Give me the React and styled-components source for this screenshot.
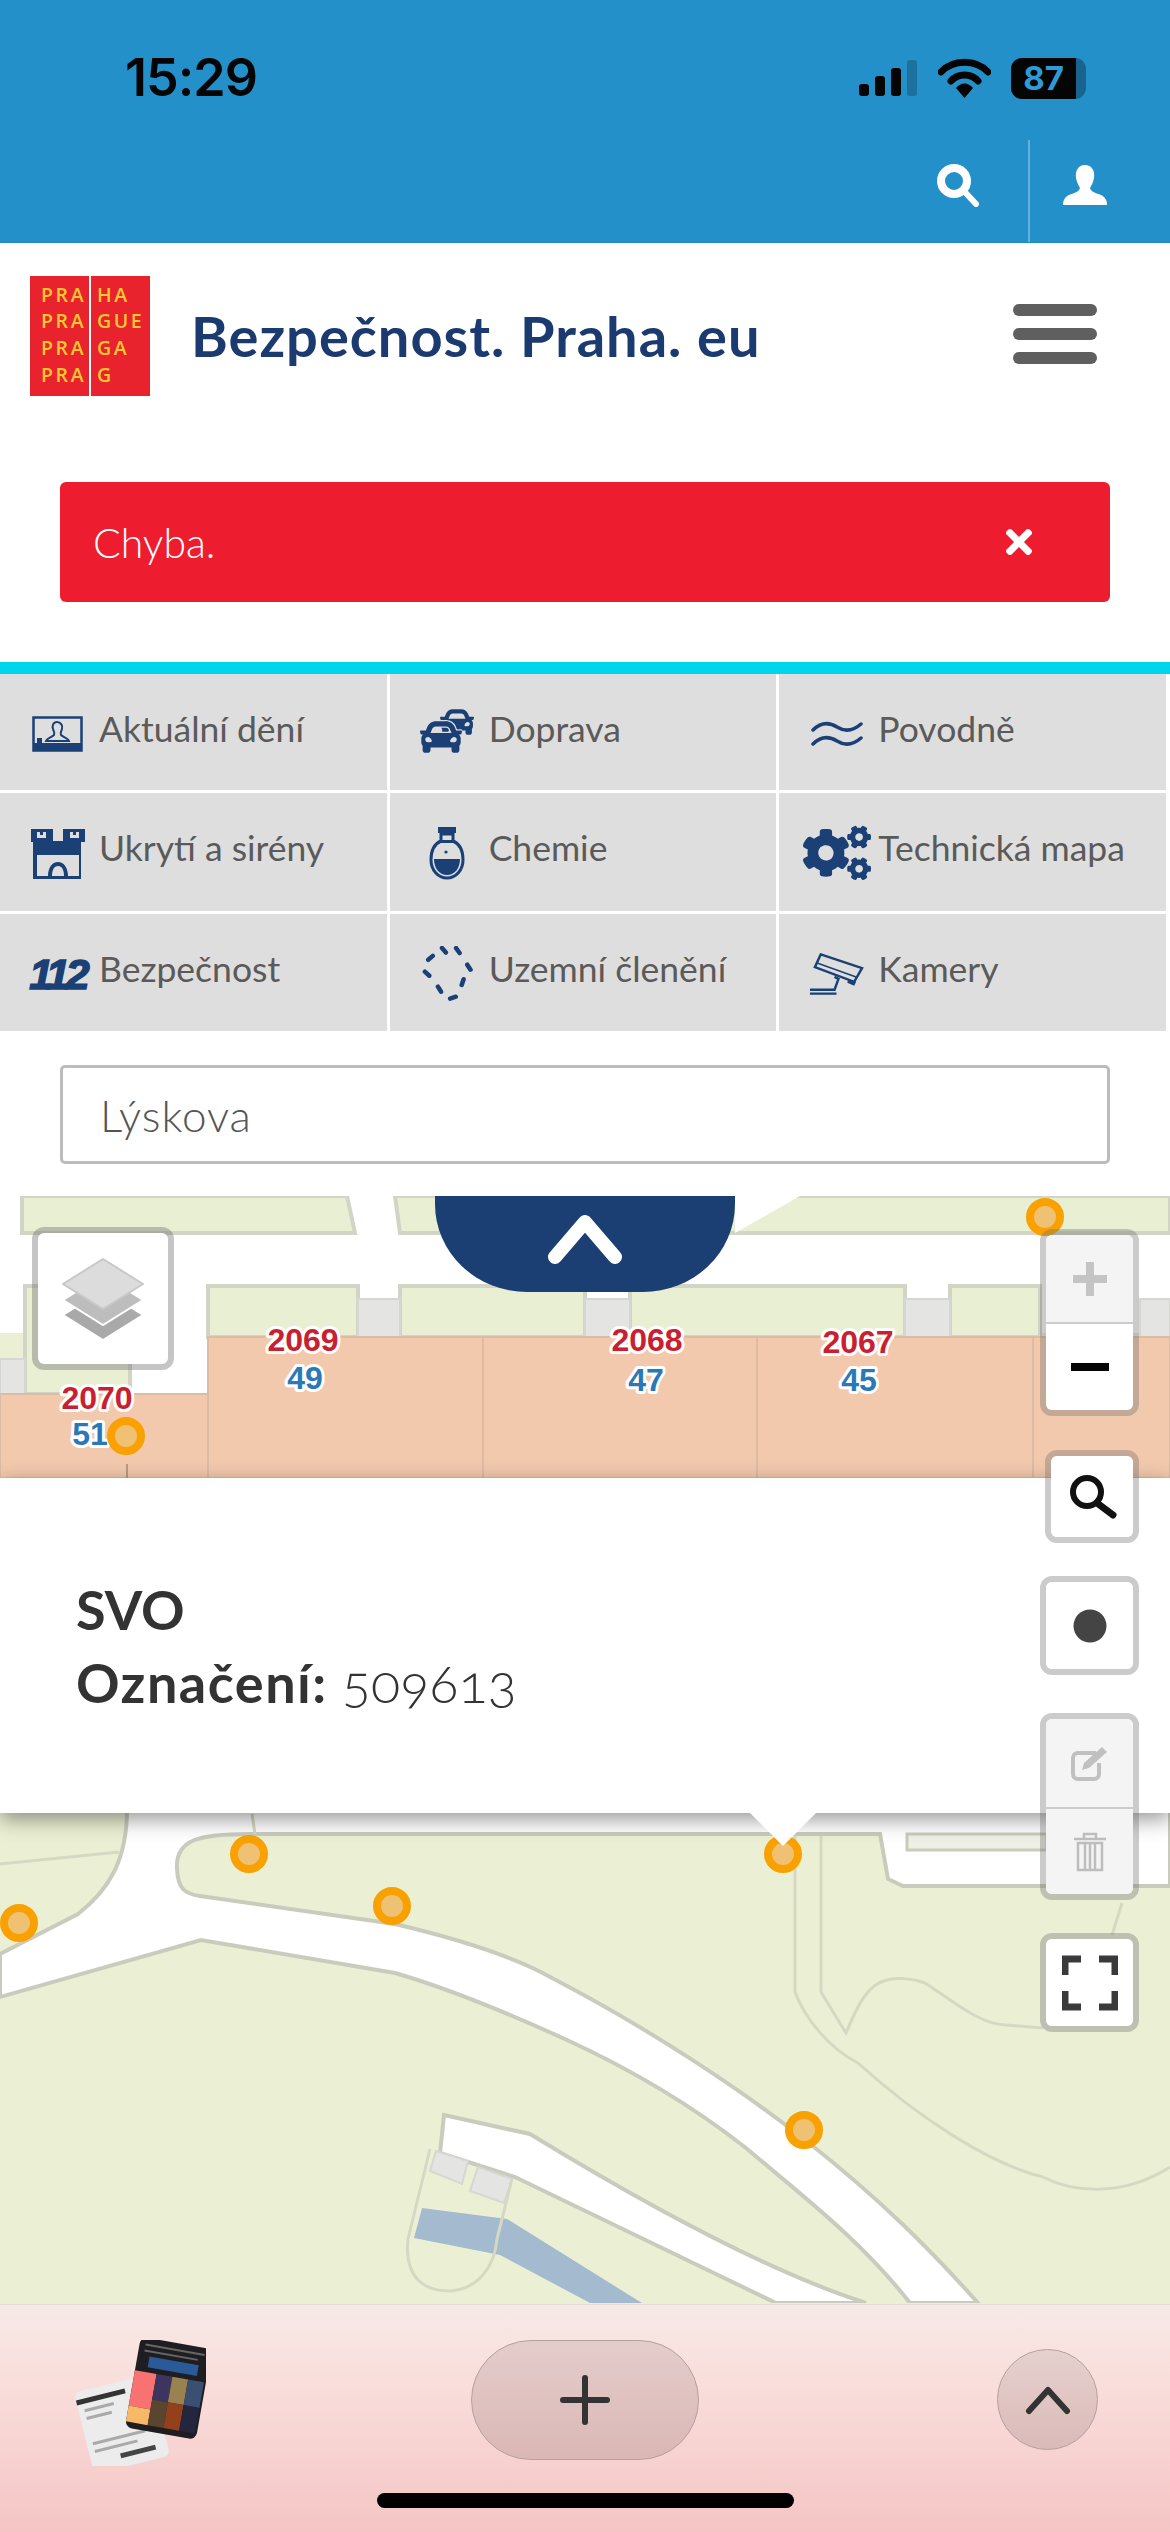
import React from "react";
import styled, { createGlobalStyle } from "styled-components";
import { FaCar, FaCogs, FaTimes } from "react-icons/fa";

const GlobalStyle = createGlobalStyle`
  html, body {
    margin: 0;
    padding: 0;
    background: #fff;
  }
  * {
    box-sizing: border-box;
  }
`;

const navy = "#1b4076";

const Page = styled.div`
  width: 1170px;
  height: 2532px;
  display: flex;
  flex-direction: column;
  overflow: hidden;
  background: #fff;
  font-family: "Lato", "Open Sans", sans-serif;
`;

const TopBar = styled.header`
  height: 243px;
  background: #2490c9;
  border-bottom: 1px solid #1f8fb8;
  display: flex;
  flex-direction: column;
`;

const StatusBar = styled.div`
  height: 140px;
  display: flex;
  align-items: flex-start;
  justify-content: space-between;
  padding: 50px 84px 0 125px;
`;

const Clock = styled.span`
  font-family: "Inter", sans-serif;
  font-size: 52px;
  font-weight: 600;
  line-height: 56px;
  letter-spacing: -1px;
  color: #050505;
`;

const StatusIcons = styled.div`
  display: flex;
  align-items: center;
  gap: 20px;
  height: 56px;
`;

const BatteryWrap = styled.div`
  position: relative;
  width: 75px;
  height: 41px;
  border-radius: 11px;
  background: rgba(5, 30, 50, 0.38);
  overflow: hidden;
`;

const BatteryFill = styled.div`
  width: 87%;
  height: 100%;
  background: #050505;
  display: flex;
  align-items: center;
  justify-content: center;
  color: #2f9bd6;
  font-family: "Inter", sans-serif;
  font-size: 33px;
  font-weight: 700;
`;

const TopActions = styled.div`
  flex: 1;
  display: flex;
  justify-content: flex-end;
`;

const TopAction = styled.div`
  display: flex;
  align-items: center;
  justify-content: center;
  width: ${(p) => p.$w}px;
  padding: 0 30px 12px 0;
  border-left: ${(p) => (p.$divided ? "2px solid #63b2dc" : "none")};
`;

const Brand = styled.div`
  display: flex;
  align-items: center;
  padding: 33px 73px 87px 30px;
  height: 239px;
`;

const Logo = styled.div`
  width: 120px;
  height: 120px;
  flex: none;
  background: #e8232e;
  display: grid;
  grid-template-columns: 59px 59px;
  column-gap: 2px;
  background-image: linear-gradient(#fff, #fff);
  background-size: 2px 100%;
  background-position: 59px 0;
  background-repeat: no-repeat;
`;

const LogoColumn = styled.div`
  padding: 6px 0 0 ${(p) => p.$left}px;
  color: #fdc82f;
  font-family: "Open Sans", sans-serif;
  font-size: 19.5px;
  font-weight: 600;
  line-height: 26.7px;
  letter-spacing: 2.6px;
  white-space: nowrap;
`;

const Title = styled.h1`
  margin: 0 0 0 41px;
  flex: 1;
  color: #1b3a6f;
  font-size: 56px;
  font-weight: 700;
  line-height: 70px;
  letter-spacing: 1px;
  white-space: nowrap;
`;

const Burger = styled.div`
  width: 84px;
  display: flex;
  flex-direction: column;
  gap: 12px;
  margin-bottom: 3px;
`;

const BurgerBar = styled.span`
  height: 12px;
  border-radius: 6px;
  background: #5f5f5f;
`;

const Alert = styled.div`
  margin: 0 60px 60px;
  height: 120px;
  padding: 0 72px 0 33px;
  border-radius: 6px;
  background: #ee1c2f;
  color: #fff;
  display: flex;
  align-items: center;
  justify-content: space-between;
  font-size: 41px;
  font-weight: 300;
`;

const CyanStrip = styled.div`
  height: 12px;
  background: #00d5ee;
`;

const Tiles = styled.nav`
  display: grid;
  grid-template-columns: repeat(3, 1fr);
  grid-template-rows: 116px 118px 117px;
  gap: 3px;
  padding-right: 4px;
`;

const Tile = styled.a`
  display: flex;
  align-items: flex-start;
  gap: 14px;
  padding: 28px 0 0 30px;
  background: #dedede;
  color: #5a5a5a;
  font-size: 35.5px;
  line-height: 54px;
  white-space: nowrap;
`;

const TileIcon = styled.span`
  flex: none;
  width: 55px;
  height: 64px;
  display: flex;
  align-items: center;
  justify-content: center;
  position: relative;
  color: ${navy};
`;

const CarBack = styled(FaCar)`
  position: absolute;
  left: 20px;
  top: 3px;
  width: 34px;
  height: 34px;
`;

const CarFront = styled(FaCar)`
  position: absolute;
  left: 0;
  top: 14px;
  width: 42px;
  height: 42px;
  stroke: #dedede;
  stroke-width: 30px;
  paint-order: stroke;
`;

const Cogs = styled(FaCogs)`
  width: 68px;
  height: 68px;
  flex: none;
  margin-left: -6px;
  margin-right: -7px;
`;

const Badge112 = styled.span`
  font-family: "Liberation Sans", sans-serif;
  font-style: italic;
  font-weight: 700;
  font-size: 43px;
  letter-spacing: -4px;
  line-height: 64px;
  color: ${navy};
  -webkit-text-stroke: 1.5px ${navy};
`;

const SearchRow = styled.div`
  padding: 34px 60px 32px;
`;

const SearchInput = styled.div`
  height: 99px;
  border: 3px solid #bcbcbc;
  border-radius: 5px;
  padding-left: 37px;
  display: flex;
  align-items: center;
  color: #555;
  font-size: 44px;
  font-weight: 300;
  letter-spacing: 1px;
`;

const MapArea = styled.section`
  position: relative;
  flex: 1;
  overflow: hidden;
  background: #ebf0d4;
`;

const MapCanvas = styled.svg`
  display: block;
  width: 1170px;
  height: 1107px;
`;

const CollapseTab = styled.div`
  position: absolute;
  left: 435px;
  top: 0;
  width: 300px;
  height: 96px;
  border-radius: 0 0 92px 92px / 0 0 88px 88px;
  background: #1b3f72;
  display: flex;
  justify-content: center;
  padding-top: 18px;
`;

const LayersButton = styled.div`
  position: absolute;
  left: 32px;
  top: 31px;
  width: 142px;
  height: 143px;
  background: #fff;
  background-clip: padding-box;
  border: 6px solid rgba(110, 110, 110, 0.4);
  border-radius: 12px;
  display: flex;
  align-items: center;
  justify-content: center;
`;

const Popup = styled.div`
  position: absolute;
  left: 0;
  right: 0;
  top: 282px;
  height: 335px;
  padding: 95px 0 0 76px;
  background: #fff;
  box-shadow: 0 6px 20px rgba(0, 0, 0, 0.42);
  color: #333;
  font-size: 54px;
  line-height: 73px;
  &::after {
    content: "";
    position: absolute;
    left: 750px;
    top: 100%;
    border-left: 33px solid transparent;
    border-right: 33px solid transparent;
    border-top: 33px solid #fff;
  }
`;

const PopupTitle = styled.div`
  font-weight: 700;
`;

const PopupLine = styled.div`
  font-weight: 700;
  letter-spacing: 1.5px;
`;

const PopupValue = styled.span`
  font-weight: 300;
  margin-left: 14px;
  font-variant-numeric: oldstyle-nums;
  letter-spacing: 0;
`;

const Controls = styled.div`
  position: absolute;
  right: 31px;
  top: 33px;
  width: 99px;
  display: flex;
  flex-direction: column;
  align-items: flex-end;
`;

const ControlGroup = styled.div`
  width: ${(p) => p.$w || 99}px;
  margin-top: ${(p) => p.$gap || 0}px;
  border: 6px solid rgba(110, 110, 110, 0.36);
  border-radius: 12px;
  background-clip: padding-box;
  overflow: hidden;
  display: flex;
  flex-direction: column;
`;

const ControlButton = styled.div`
  height: ${(p) => p.$h}px;
  display: flex;
  align-items: center;
  justify-content: center;
  background: ${(p) => (p.$disabled ? "#f4f4f4" : "#fff")};
  & + & {
    border-top: 2px solid #ccc;
  }
`;

const BottomBar = styled.footer`
  height: 228px;
  position: relative;
  flex: none;
  display: flex;
  align-items: flex-start;
  padding: 35px 72px 0 72px;
  border-top: 1px solid #e8dcd6;
  background: linear-gradient(#f7e9e6, #f9dedb 35%, #f4c5c4);
`;

const Thumb = styled.svg`
  width: 134px;
  height: 126px;
  flex: none;
  filter: blur(0.6px);
`;

const PlusPill = styled.div`
  width: 228px;
  height: 120px;
  margin-left: 265px;
  border: 1px solid #b5a09f;
  border-radius: 60px;
  background: linear-gradient(#e3cdcb, #dbb7b5);
  display: flex;
  align-items: center;
  justify-content: center;
`;

const RoundButton = styled.div`
  width: 101px;
  height: 101px;
  margin: 9px 0 0 298px;
  border: 1px solid #b5a09f;
  border-radius: 50%;
  background: linear-gradient(#e5d1cf, #dbbab8);
  display: flex;
  align-items: center;
  justify-content: center;
`;

const HomeIndicator = styled.div`
  position: absolute;
  left: 377px;
  bottom: 24px;
  width: 417px;
  height: 15px;
  border-radius: 8px;
  background: #000;
`;

const orangeLots = [
  [208, 1338, 275, 141],
  [483, 1338, 274, 141],
  [757, 1338, 276, 141],
  [1033, 1338, 137, 141],
  [0, 1395, 208, 84],
];

const greenLots = [
  "M22 1197 L347 1197 L355 1234 L22 1234 Z",
  "M395 1197 L1170 1197 L1170 1234 L400 1234 Z",
  "M25 1287 L130 1287 L130 1395 L25 1395 Z",
  "M208 1287 L358 1287 L358 1338 L208 1338 Z",
  "M400 1287 L585 1287 L585 1338 L400 1338 Z",
  "M630 1287 L905 1287 L905 1338 L630 1338 Z",
  "M950 1287 L1040 1287 L1040 1338 L950 1338 Z",
];

const steps = [
  [358, 1300, 42, 38],
  [585, 1300, 45, 38],
  [905, 1300, 45, 38],
  [1140, 1300, 30, 38],
  [0, 1360, 25, 35],
];

const plotLabels = [
  { x: 303, y: 1352, plot: "2069", nr: "49", nx: 305, ny: 1390 },
  { x: 647, y: 1352, plot: "2068", nr: "47", nx: 646, ny: 1392 },
  { x: 858, y: 1354, plot: "2067", nr: "45", nx: 859, ny: 1392 },
  { x: 97, y: 1410, plot: "2070", nr: "51", nx: 90, ny: 1446 },
];

const markers = [
  [1045, 1218],
  [126, 1437],
  [249, 1855],
  [392, 1907],
  [783, 1855],
  [19, 1924],
  [804, 2131],
];

const roadFill =
  "M0 1810 H1170 V1887 H903 L888 1880 L880 1835 H250 C200 1835 175 1840 177 1870 C178 1890 185 1895 200 1897 L395 1925 C450 1938 510 1955 552 1979 C650 2030 740 2090 804 2140 C880 2200 930 2250 978 2304 H910 C860 2240 800 2195 746 2149 C690 2105 630 2070 567 2041 C510 2015 450 1990 395 1974 L201 1941 L0 1998 V1955 L78 1915 C110 1890 127 1860 127 1810 Z";

const CityMap = () => (
  <MapCanvas viewBox="0 1197 1170 1107">
    <rect x="0" y="1197" width="1170" height="1107" fill="#ebf0d4" />
    {/* white street band with the buildings on top */}
    <rect x="0" y="1234" width="1170" height="100" fill="#fff" />
    <rect x="0" y="1197" width="1170" height="40" fill="#fff" />
    <rect x="130" y="1234" width="78" height="161" fill="#fff" />
    {greenLots.map((d) => (
      <path key={d} d={d} fill="#e9efd3" stroke="#d2d5c6" strokeWidth="4" />
    ))}
    <path d="M735 1234 L800 1197 L735 1197 Z" fill="#fff" />
    {steps.map(([x, y, w, h]) => (
      <rect key={x + "-" + y} x={x} y={y} width={w} height={h} fill="#e4e4e2" stroke="#d6d6d3" strokeWidth="2" />
    ))}
    {orangeLots.map(([x, y, w, h]) => (
      <rect key={x} x={x} y={y} width={w} height={h} fill="#f3c9ad" stroke="#dcbca5" strokeWidth="2" />
    ))}
    <line x1="127" y1="1465" x2="127" y2="1479" stroke="#b99a85" strokeWidth="2" />
    {plotLabels.map((l) => (
      <g key={l.plot} fontFamily="Liberation Sans, sans-serif" fontSize="32" fontWeight="700" textAnchor="middle" stroke="#fff" strokeWidth="6" paintOrder="stroke" strokeLinejoin="round">
        <text x={l.x} y={l.y} fill="#c9202f">{l.plot}</text>
        <text x={l.nx} y={l.ny} fill="#2b78b8">{l.nr}</text>
      </g>
    ))}

    {/* lower part of the map, under the popup */}
    <path d={roadFill} fill="#fff" stroke="#c9ccbc" strokeWidth="4" />
    <rect x="907" y="1835" width="140" height="16" fill="#eef0e6" stroke="#c9ccbc" strokeWidth="3" />
    <path d="M444 2116 L530 2135 C620 2190 760 2270 866 2304 H776 L515 2178 L440 2154 Z" fill="#fff" stroke="#c9ccbc" strokeWidth="4" />
    <path d="M436 2152 L468 2162 L462 2185 L430 2172 Z" fill="#e4e4e2" stroke="#d6d6d3" strokeWidth="2" />
    <path d="M478 2168 L512 2180 L504 2204 L470 2192 Z" fill="#e4e4e2" stroke="#d6d6d3" strokeWidth="2" />
    <path d="M422 2209 L507 2220 L642 2304 H590 L500 2256 L414 2239 Z" fill="#a4bacf" />
    <path d="M430 2150 L408 2240 C404 2280 425 2292 450 2292 C480 2290 495 2265 497 2240 L512 2180" fill="none" stroke="#d5d9c3" strokeWidth="3" />
    <path d="M795 1837 V1993 C805 2020 830 2050 858 2064 C920 2120 990 2165 1043 2178 C1070 2192 1120 2200 1170 2168" fill="none" stroke="#d5d9c3" strokeWidth="3" />
    <path d="M821 1837 V1993 L846 2034 C860 2000 870 1985 887 1981 C900 1978 915 1980 925 1984 C950 2000 980 2026 1006 2026 L1043 2029" fill="none" stroke="#d5d9c3" strokeWidth="3" />
    <path d="M0 1865 L119 1853 M252 1815 L255 1835 M1122 1904 L1112 1936" fill="none" stroke="#d5d9c3" strokeWidth="3" />

    {markers.map(([x, y]) => (
      <circle key={x} cx={x} cy={y} r="15" fill="#efc173" stroke="#f9a100" strokeWidth="8" />
    ))}
  </MapCanvas>
);

const App = () => (
  <Page>
    <GlobalStyle />
    <TopBar>
      <StatusBar>
        <Clock>15:29</Clock>
        <StatusIcons>
          <svg width="59" height="36" viewBox="0 0 59 36">
            <rect x="0" y="24" width="10" height="12" rx="3" fill="#050505" />
            <rect x="16" y="16" width="10" height="20" rx="3" fill="#050505" />
            <rect x="32" y="8" width="10" height="28" rx="3" fill="#050505" />
            <rect x="48" y="0" width="10" height="36" rx="3" fill="#050505" fillOpacity="0.22" />
          </svg>
          <svg width="53" height="40" viewBox="0 0 53 40">
            <path d="M3 14 C15 1 38 1 50 14" fill="none" stroke="#050505" strokeWidth="7" strokeLinecap="round" />
            <path d="M13 23 C20 15 33 15 40 23" fill="none" stroke="#050505" strokeWidth="7" strokeLinecap="round" />
            <path d="M18 30 C23 24 30 24 35 30 L26.5 40 Z" fill="#050505" />
          </svg>
          <BatteryWrap>
            <BatteryFill>87</BatteryFill>
          </BatteryWrap>
        </StatusIcons>
      </StatusBar>
      <TopActions>
        <TopAction $w={110}>
          <svg width="44" height="44" viewBox="0 0 44 44">
            <circle cx="18" cy="18" r="13" fill="none" stroke="#fff" strokeWidth="8" />
            <path d="M27 27 L40 41" stroke="#fff" strokeWidth="6" strokeLinecap="round" />
          </svg>
        </TopAction>
        <TopAction $w={142} $divided>
          <svg width="44" height="40" viewBox="0 0 44 40">
            <path d="M22 0 C29 0 32 6 31 13 C30 18 28 21 27 23 C28 27 33 28 38 30 C42 32 44 35 44 40 H0 C0 35 2 32 6 30 C11 28 16 27 17 23 C16 21 14 18 13 13 C12 6 15 0 22 0 Z" fill="#fff" />
          </svg>
        </TopAction>
      </TopActions>
    </TopBar>

    <Brand>
      <Logo>
        <LogoColumn $left={11}>PRA<br />PRA<br />PRA<br />PRA</LogoColumn>
        <LogoColumn $left={6}>HA<br />GUE<br />GA<br />G</LogoColumn>
      </Logo>
      <Title>Bezpečnost. Praha. eu</Title>
      <Burger>
        <BurgerBar />
        <BurgerBar />
        <BurgerBar />
      </Burger>
    </Brand>

    <Alert>
      <span>Chyba.</span>
      <FaTimes size={38} />
    </Alert>

    <CyanStrip />

    <Tiles>
      <Tile>
        <TileIcon>
          <svg width="51" height="36" viewBox="0 0 51 36">
            <rect x="1.5" y="1.5" width="48" height="33" fill="none" stroke={navy} strokeWidth="2.5" />
            <path d="M25 6 C21 6 20 10 21 13 C22 16 23 17 22 19 C20 21 15 22 14 25 H37 C36 22 31 21 29 19 C28 17 29 16 30 13 C31 10 29 6 25 6 Z" fill="none" stroke={navy} strokeWidth="2" />
            <rect x="1.5" y="27" width="48" height="8" fill={navy} />
            <rect x="5" y="22" width="5" height="5" fill={navy} />
          </svg>
        </TileIcon>
        Aktuální dění
      </Tile>
      <Tile>
        <TileIcon>
          <CarBack />
          <CarFront />
        </TileIcon>
        Doprava
      </Tile>
      <Tile>
        <TileIcon>
          <svg width="52" height="30" viewBox="0 0 52 30">
            <path d="M2 11 C10 3 18 3 26 8 C34 13 42 12 50 5" fill="none" stroke={navy} strokeWidth="3.5" strokeLinecap="round" />
            <path d="M2 25 C10 17 18 17 26 22 C34 27 42 26 50 19" fill="none" stroke={navy} strokeWidth="3.5" strokeLinecap="round" />
          </svg>
        </TileIcon>
        Povodně
      </Tile>

      <Tile>
        <TileIcon>
          <svg width="54" height="52" viewBox="0 0 54 52">
            <path d="M0 2 H22 V14 H32 V2 H54 V15 H50 V52 H2 V15 H0 Z" fill={navy} />
            <path d="M6 5 h3 v3 h3 v-3 h3 v6 h-9 Z M39 5 h3 v3 h3 v-3 h3 v6 h-9 Z" fill="#dedede" />
            <path d="M6 28 H48 V49 H37 C37 41 33 35 27 35 C21 35 17 41 17 49 H6 Z" fill="#dedede" />
            <path d="M21 49 C21 43 23 39 27 39 C31 39 33 43 33 49 Z" fill="#dedede" />
          </svg>
        </TileIcon>
        Ukrytí a sirény
      </Tile>
      <Tile>
        <TileIcon>
          <svg width="36" height="54" viewBox="0 0 36 54">
            <rect x="9" y="1" width="18" height="6" fill={navy} />
            <path d="M12 8 H24 V15 C31 18 34 24 34 34 C34 44 27 52 18 52 C9 52 2 44 2 34 C2 24 5 18 12 15 Z" fill="none" stroke={navy} strokeWidth="3" />
            <path d="M5 33 H31 C31 42 26 49 18 49 C10 49 5 42 5 33 Z" fill={navy} />
            <circle cx="17" cy="26" r="1.6" fill={navy} />
            <rect x="12" y="14" width="12" height="3" fill={navy} />
          </svg>
        </TileIcon>
        Chemie
      </Tile>
      <Tile>
        <TileIcon>
          <Cogs />
        </TileIcon>
        Technická mapa
      </Tile>

      <Tile>
        <TileIcon>
          <Badge112>112</Badge112>
        </TileIcon>
        Bezpečnost
      </Tile>
      <Tile>
        <TileIcon>
          <svg width="54" height="56" viewBox="0 0 54 56">
            <path d="M22 2 L28 9 L36 2 L41 9 L52 26 L44 32 L38 50 L26 54 L20 44 L14 34 L3 24 L8 14 Z" fill="none" stroke={navy} strokeWidth="4.5" strokeDasharray="6 14" strokeLinecap="round" />
          </svg>
        </TileIcon>
        Uzemní členění
      </Tile>
      <Tile>
        <TileIcon>
          <svg width="56" height="42" viewBox="0 0 56 42">
            <path d="M12 1 L54 15 L46 29 L6 14 Z" fill="none" stroke={navy} strokeWidth="2.5" />
            <path d="M9 10 L48 24" stroke={navy} strokeWidth="1.5" />
            <path d="M40 26 L48 29 L46 33 L39 30 Z" fill={navy} />
            <path d="M26 24 L30 26 L26 37 L1 37 M1 41 H28" fill="none" stroke={navy} strokeWidth="2.5" />
          </svg>
        </TileIcon>
        Kamery
      </Tile>
    </Tiles>

    <SearchRow>
      <SearchInput>Lýskova</SearchInput>
    </SearchRow>

    <MapArea>
      <CityMap />
      <CollapseTab>
        <svg width="74" height="50" viewBox="0 0 74 50">
          <path d="M7 43 L37 8 L67 43" fill="none" stroke="#fff" strokeWidth="14" strokeLinecap="round" strokeLinejoin="round" />
        </svg>
      </CollapseTab>
      <LayersButton>
        <svg width="82" height="82" viewBox="0 0 82 82">
          <path d="M41 32 L81 57 L41 82 L1 57 Z" fill="#a9a9a9" stroke="#fff" strokeWidth="2" />
          <path d="M41 17 L81 42 L41 67 L1 42 Z" fill="#bdbdbd" stroke="#fff" strokeWidth="2" />
          <path d="M41 1 L81 26 L41 51 L1 26 Z" fill="#dcdcdc" stroke="#c8c8c8" strokeWidth="2" />
        </svg>
      </LayersButton>
      <Popup>
        <PopupTitle>SVO</PopupTitle>
        <PopupLine>
          Označení:<PopupValue>509613</PopupValue>
        </PopupLine>
      </Popup>
      <Controls>
        <ControlGroup>
          <ControlButton $h={87} $disabled>
            <svg width="38" height="38" viewBox="0 0 38 38">
              <path d="M19 2 V36 M2 19 H36" stroke="#c4c4c4" strokeWidth="8" />
            </svg>
          </ControlButton>
          <ControlButton $h={88}>
            <svg width="38" height="8" viewBox="0 0 38 8">
              <rect width="38" height="8" fill="#050505" />
            </svg>
          </ControlButton>
        </ControlGroup>
        <ControlGroup $gap={34} $w={94}>
          <ControlButton $h={81}>
            <svg width="50" height="44" viewBox="0 0 50 44">
              <circle cx="20" cy="17" r="14" fill="none" stroke="#111" strokeWidth="6" />
              <path d="M30 28 L46 40" stroke="#111" strokeWidth="7" strokeLinecap="round" />
            </svg>
          </ControlButton>
        </ControlGroup>
        <ControlGroup $gap={33}>
          <ControlButton $h={87}>
            <svg width="34" height="34" viewBox="0 0 34 34">
              <circle cx="17" cy="17" r="16.5" fill="#444" />
            </svg>
          </ControlButton>
        </ControlGroup>
        <ControlGroup $gap={38}>
          <ControlButton $h={88} $disabled>
            <svg width="40" height="40" viewBox="0 0 40 40">
              <path d="M26 10 H8 C5 10 3 12 3 15 V31 C3 34 5 36 8 36 H24 C27 36 29 34 29 31 V20" fill="none" stroke="#c0c0c0" strokeWidth="4" />
              <path d="M12 27 L14 20 L32 4 L37 9 L19 25 Z" fill="#c0c0c0" />
            </svg>
          </ControlButton>
          <ControlButton $h={87} $disabled>
            <svg width="34" height="40" viewBox="0 0 34 40">
              <path d="M1 7 H33 M11 7 V2 H23 V7" fill="none" stroke="#bdbdbd" strokeWidth="2.5" />
              <path d="M5 11 H29 V38 H5 Z M12 11 V38 M17 11 V38 M22 11 V38" fill="none" stroke="#bdbdbd" strokeWidth="2.5" />
            </svg>
          </ControlButton>
        </ControlGroup>
        <ControlGroup $gap={33}>
          <ControlButton $h={87}>
            <svg width="56" height="56" viewBox="0 0 56 56">
              <path d="M3 20 V4 H19 M37 4 H53 V20 M3 36 V52 H19 M37 52 H53 V36" fill="none" stroke="#3a3a3a" strokeWidth="7" />
            </svg>
          </ControlButton>
        </ControlGroup>
      </Controls>
    </MapArea>

    <BottomBar>
      <Thumb viewBox="0 0 134 126">
        <g transform="rotate(-14 50 80)">
          <rect x="10" y="42" width="78" height="84" rx="6" fill="#ececec" />
          <rect x="10" y="50" width="50" height="5" fill="#333" />
          <path d="M16 62 H46 M16 70 H42 M16 96 H70 M16 104 H60" stroke="#aaa" strokeWidth="3" />
          <rect x="40" y="112" width="36" height="5" fill="#444" />
        </g>
        <g transform="rotate(10 95 50)">
          <rect x="60" y="2" width="72" height="92" rx="7" fill="#1d1d22" />
          <path d="M66 9 H126 M66 15 H120" stroke="#666" strokeWidth="2" />
          <rect x="72" y="20" width="50" height="11" fill="#2a5a98" />
          <rect x="60" y="36" width="22" height="36" fill="#f97272" />
          <rect x="60" y="72" width="22" height="16" fill="#f8b868" />
          <rect x="82" y="36" width="16" height="26" fill="#3d3560" />
          <rect x="98" y="36" width="16" height="26" fill="#9a8250" />
          <rect x="114" y="36" width="16" height="26" fill="#3b4f73" />
          <rect x="82" y="62" width="16" height="26" fill="#5a4630" />
          <rect x="98" y="62" width="16" height="26" fill="#93401c" />
          <rect x="114" y="62" width="16" height="26" fill="#23263c" />
        </g>
      </Thumb>
      <PlusPill>
        <svg width="50" height="50" viewBox="0 0 50 50">
          <path d="M25 3 V47 M3 25 H47" stroke="#333" strokeWidth="6" strokeLinecap="round" />
        </svg>
      </PlusPill>
      <RoundButton>
        <svg width="46" height="30" viewBox="0 0 46 30">
          <path d="M4 26 L23 5 L42 26" fill="none" stroke="#333" strokeWidth="6" strokeLinecap="round" strokeLinejoin="round" />
        </svg>
      </RoundButton>
      <HomeIndicator />
    </BottomBar>
  </Page>
);

export default App;
